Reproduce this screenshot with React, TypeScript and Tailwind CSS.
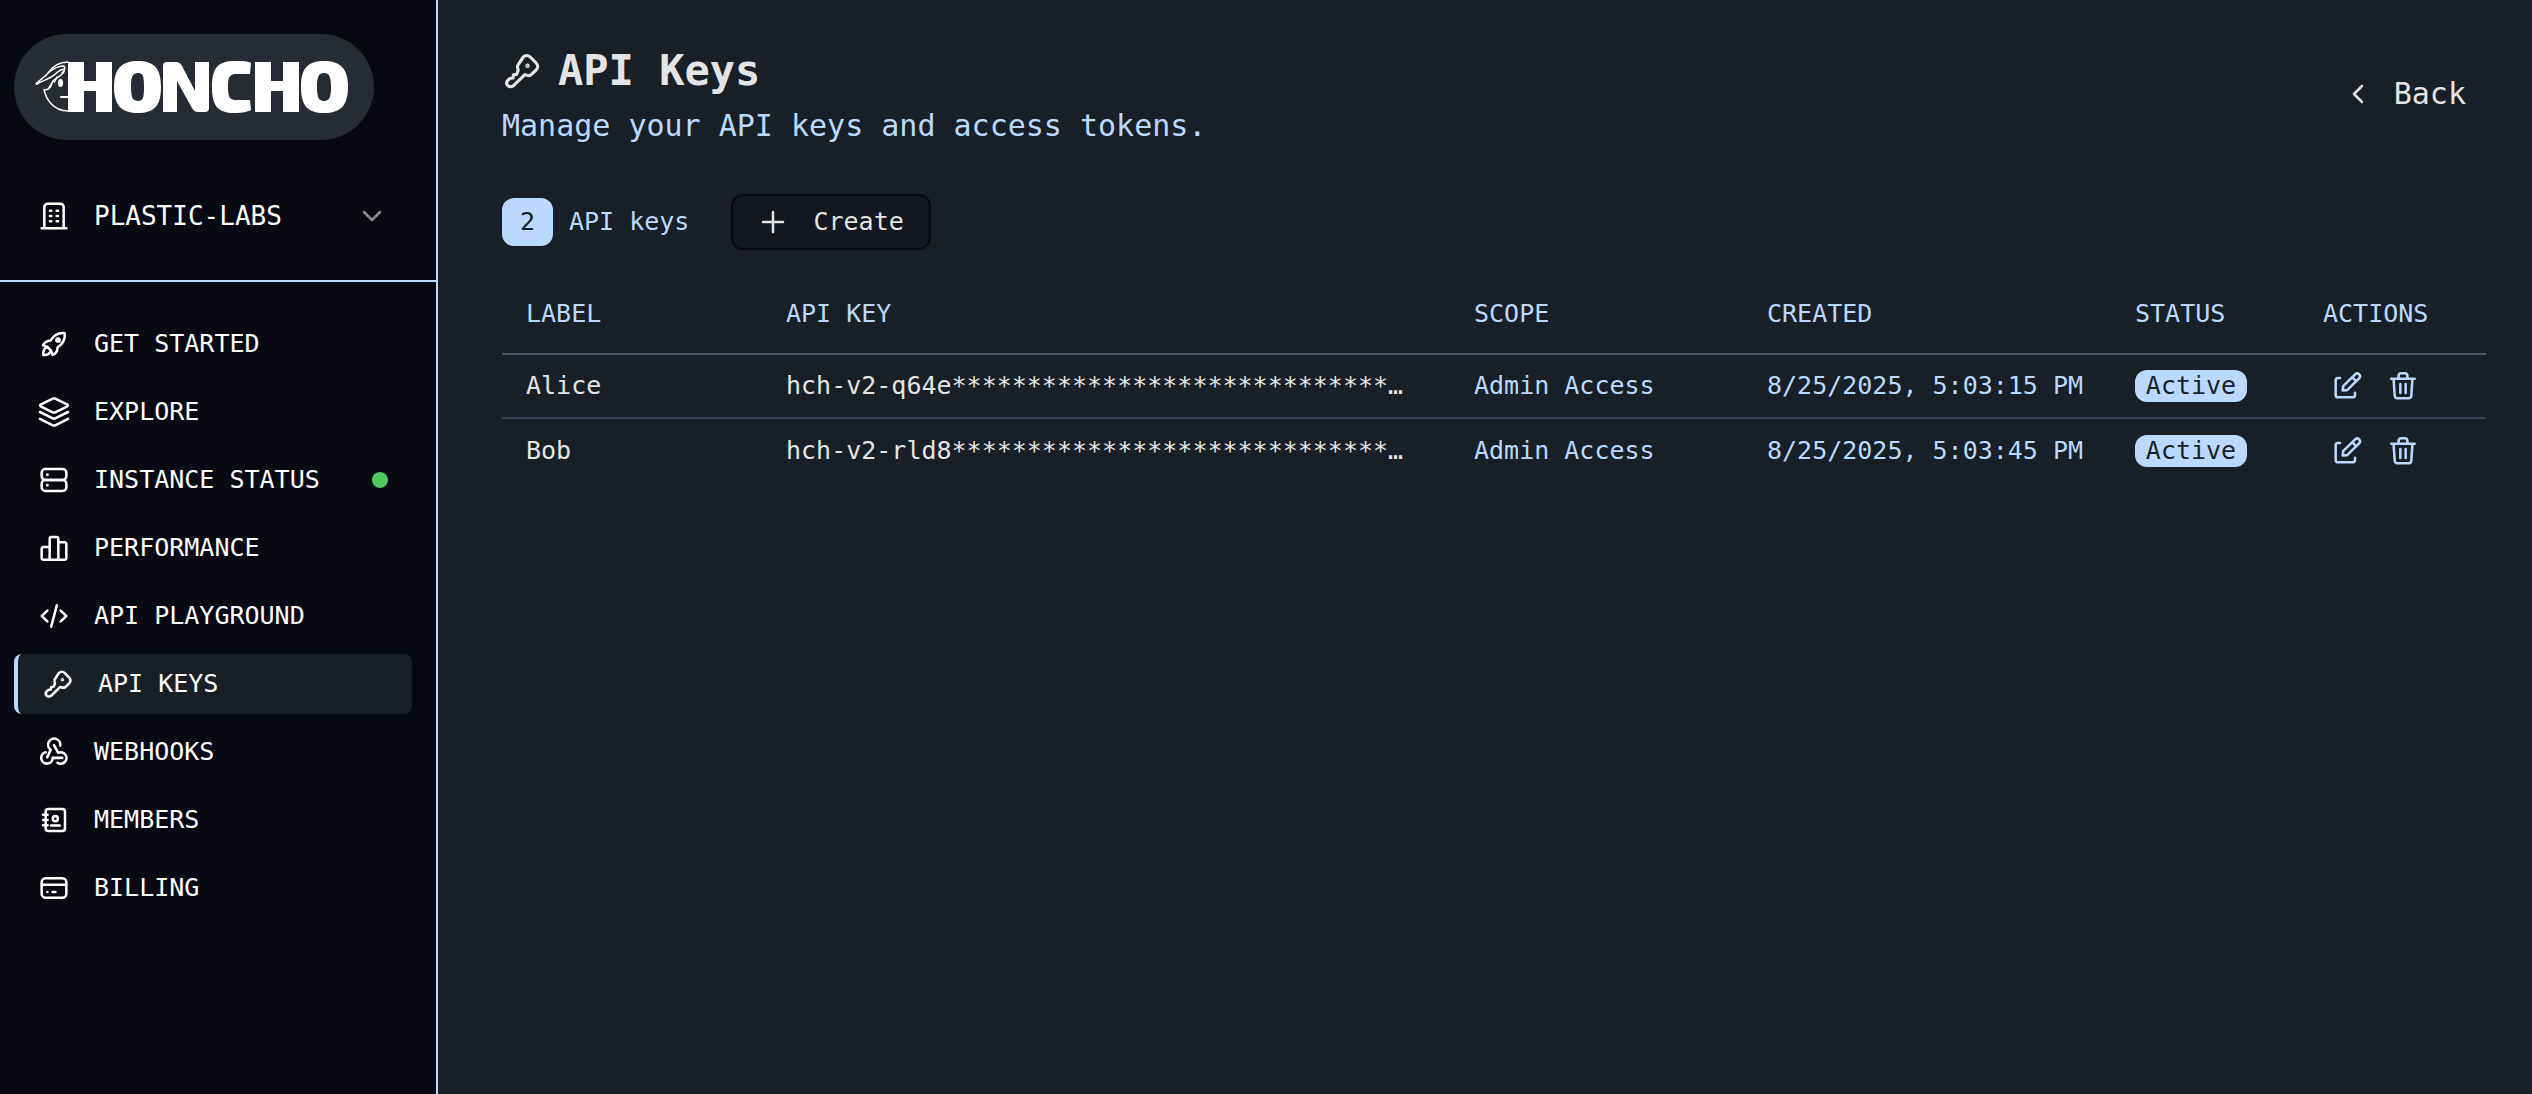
import type { ReactNode } from "react";

function Icon({ children, size = "size-8" }: { children: ReactNode; size?: string }) {
  return (
    <svg
      aria-hidden="true"
      className={`${size} shrink-0`}
      viewBox="0 0 24 24"
      fill="none"
      stroke="currentColor"
      strokeWidth="1.9"
      strokeLinecap="round"
      strokeLinejoin="round"
    >
      {children}
    </svg>
  );
}

const building = (
  <>
    <path d="M2.75 21.25h18.5M4.75 21V5.25a2.5 2.5 0 0 1 2.5-2.5h9.5a2.5 2.5 0 0 1 2.5 2.5V21" />
    <path d="M9 8h1M14 8h1M9 12h1M14 12h1M9 16h1M14 16h1" strokeWidth="1.9" />
  </>
);

const rocket = (
  <>
    <path d="M7 14.2 3.8 13c.9-2.3 2.7-3.5 5.7-3.7C12 5.3 15.5 3.4 20 3.9c.6 4.6-1.3 8-5.3 10.6-.1 2.9-1.3 4.8-3.7 5.7L9.7 17" />
    <path d="M7 14.2c-2.3.8-3.3 2.8-3.1 6 3.3.2 5.2-.9 5.8-3.2M7 14.2 9.7 17" />
    <circle cx="15" cy="9" r="1.2" fill="currentColor" />
  </>
);

const layers = (
  <path d="M11.1 1.9a2 2 0 0 1 1.8 0l8.8 4.3c.9.4.9 1.2 0 1.7l-8.8 4.3a2 2 0 0 1-1.8 0L2.3 7.9c-.9-.5-.9-1.3 0-1.7zM1.5 12l9.6 4.8a2 2 0 0 0 1.8 0l9.6-4.8M1.5 17.2l9.6 4.8a2 2 0 0 0 1.8 0l9.6-4.8" />
);

const server = (
  <>
    <rect x="2.75" y="3.75" width="18.5" height="8.25" rx="2.75" />
    <rect x="2.75" y="12" width="18.5" height="8.25" rx="2.75" />
    <path d="M7 8h.01M7 16h.01" strokeWidth="2.2" />
  </>
);

const chart = (
  <path d="M2.75 19.25V12.75a1.5 1.5 0 0 1 1.5-1.5h4.5v9.5H4.25a1.5 1.5 0 0 1-1.5-1.5zM8.75 20.75V5.25a1.5 1.5 0 0 1 1.5-1.5h3.5a1.5 1.5 0 0 1 1.5 1.5v15.5zM15.25 7.75h4.5a1.5 1.5 0 0 1 1.5 1.5v10a1.5 1.5 0 0 1-1.5 1.5h-4.5M8.75 20.75h6.5" />
);

const code = <path d="m7 8-4.2 4L7 16M17 8l4.2 4L17 16M14.1 4l-4.2 16" />;

const key = (
  <>
    <path d="M12.8 3.6a2.9 2.9 0 0 1 4.1 0l3.6 3.6a2.9 2.9 0 0 1 0 4.1l-2.6 2.6c-.8.8-1.9 1-2.9.7l-1.3-.4-6.8 6.6c-1.5 1.1-3.2.6-3.9-.6-.4-.9-.2-1.9.5-2.6l1.2-1.1 1.9-.3.3-1.9 1.9-.3.9-2.5-.3-1.2c-.2-1 .1-2.1.8-2.8z" />
    <circle cx="15.3" cy="8.8" r=".4" fill="currentColor" />
  </>
);

const webhook = (
  <>
    <path d="M16.7 7.2A4.6 4.6 0 1 0 9.5 10.3L6.9 16" />
    <path d="M12 6.9l3.2 5.7a4.3 4.3 0 1 1-.6 7.4" />
    <path d="M5.8 12.2A4.3 4.3 0 1 0 11 16.4h7.2" />
  </>
);

const members = (
  <>
    <rect x="5.75" y="3.75" width="14.5" height="16.5" rx="2" />
    <path d="M3.8 8h3.4M3.8 12h3.4M3.8 16h3.4M9.8 16.2h6.5" />
    <circle cx="13" cy="11" r="1.9" />
  </>
);

const card = (
  <>
    <rect x="2.75" y="4.75" width="18.5" height="14.5" rx="3" />
    <path d="M3 9.5h18" />
    <path d="M7 15h.01M11 15h2" strokeWidth="2" />
  </>
);

const edit = (
  <>
    <path d="M6.8 6H5.3a1.8 1.8 0 0 0-1.8 1.8v10.9a1.8 1.8 0 0 0 1.8 1.8h10.9a1.8 1.8 0 0 0 1.8-1.8v-1.6" />
    <path d="m8.8 15.4.3-3.3 9-8.8a2.1 2.1 0 0 1 3 3l-9 8.8zM16 5.5l3 3" />
  </>
);

const trash = (
  <path d="M3.2 6.5h17.6M8.7 6.3V4.5a2 2 0 0 1 2-2h2.6a2 2 0 0 1 2 2v1.8M4.9 6.5l.9 12.8a2 2 0 0 0 2 1.9h8.4a2 2 0 0 0 2-1.9l.9-12.8M10 10.5v6.8M14 10.5v6.8" />
);

const nav: { label: string; icon: ReactNode; active?: boolean; dot?: boolean }[] = [
  { label: "GET STARTED", icon: rocket },
  { label: "EXPLORE", icon: layers },
  { label: "INSTANCE STATUS", icon: server, dot: true },
  { label: "PERFORMANCE", icon: chart },
  { label: "API PLAYGROUND", icon: code },
  { label: "API KEYS", icon: key, active: true },
  { label: "WEBHOOKS", icon: webhook },
  { label: "MEMBERS", icon: members },
  { label: "BILLING", icon: card },
];

const mask = "*".repeat(29) + "…";

const rows = [
  { label: "Alice", apiKey: "hch-v2-q64e" + mask, created: "8/25/2025, 5:03:15 PM" },
  { label: "Bob", apiKey: "hch-v2-rld8" + mask, created: "8/25/2025, 5:03:45 PM" },
];

function Logo() {
  return (
    <a
      href="#home"
      aria-label="Honcho"
      className="flex h-[106px] w-[360px] items-center rounded-[53px] bg-[#252c33] pl-[21px] text-white"
    >
      <svg aria-hidden="true" className="h-[54px] w-[314px]" viewBox="0 0 314 54" fill="none">
        <g stroke="currentColor" strokeWidth="1.4" strokeLinecap="round" strokeLinejoin="round">
          <path d="M33 2C25 2 18 6 13.5 12.5C10 17.5 4.5 19 2 23.5C10 20 17 18 22 12.5C27 8.5 30 8 29 11.5C28 15 22 17 18 21L15.5 27C14 29 12 30.5 9 29.5C11 39 18 51 33 51" />
          <path d="M13.5 12.5C18 9 24 5.5 28.5 6C31 7 29.5 10.5 27 13M18 21L19.5 22L22 17M18 21L13 29" />
          <path d="M26 37h7" strokeWidth="2" />
        </g>
        <circle cx="2" cy="23.5" r="1.5" fill="currentColor" />
        <ellipse cx="25.5" cy="23" rx="2.5" ry="4" fill="currentColor" />
        <path
          fill="currentColor"
          fillRule="evenodd"
          d="M33 2H49V21H61V2H77V52H61V31H49V52H33ZM103 1C119 1 126 8 126 27S119 53 103 53S79 46 79 27S87 1 103 1ZM103 13C98 13 96 16 96 27S98 41 103 41S109 38 109 27S108 13 103 13ZM132 2H141Q145 2 147 6L160 31V2H174V48Q174 52 170 52H163Q159 52 157 48L142 21V52H128V6Q128 2 132 2ZM216 3L215 14H202C195 14 193 16 193 27S195 40 202 40H215L216 50C212 52 208 53 199 53C183 53 177 46 177 27S183 1 199 1C208 1 212 1 216 3ZM220 2H236V21H248V2H264V52H248V31H236V52H220ZM289 1C305 1 313 8 313 27S305 53 289 53S266 46 266 27S273 1 289 1ZM289 13C284 13 282 16 282 27S284 41 289 41S296 38 296 27S294 13 289 13Z"
        />
      </svg>
    </a>
  );
}

export default function App() {
  return (
    <div className="flex min-h-screen bg-[#181f26] font-['DejaVu_Sans_Mono',monospace] text-[25px] leading-8 text-[#e4e4e4]">
      <aside className="w-[438px] shrink-0 border-r-2 border-[#bbd9ff] bg-[#080913] text-white">
        <div className="border-b-2 border-[#bbd9ff] px-[14px] py-[34px]">
          <Logo />
          <button type="button" className="mt-[46px] flex h-[60px] w-full items-center pr-[38px] pl-6 text-left">
            <Icon>{building}</Icon>
            <span className="ml-6 flex-1 text-[26px]">PLASTIC-LABS</span>
            <svg aria-hidden="true" className="size-6 text-[#8a8a90]" viewBox="0 0 24 24" fill="none" stroke="currentColor" strokeWidth="2.5" strokeLinecap="round" strokeLinejoin="round">
              <path d="m4 8 8 8 8-8" />
            </svg>
          </button>
        </div>
        <nav className="flex flex-col gap-2 pt-8 pr-6 pl-[14px]">
          {nav.map((item) => (
            <a
              key={item.label}
              href="#section"
              aria-current={item.active ? "page" : undefined}
              className={
                item.active
                  ? "flex h-[60px] items-center rounded-lg border-l-4 border-[#bbd9ff] bg-[#181f26] px-6"
                  : "flex h-[60px] items-center rounded-lg px-6"
              }
            >
              <Icon>{item.icon}</Icon>
              <span className="ml-6 flex-1 whitespace-nowrap">{item.label}</span>
              {item.dot && <span className="size-4 shrink-0 rounded-full bg-[#50c860]" />}
            </a>
          ))}
        </nav>
      </aside>

      <main className="min-w-0 flex-1 pt-12 pr-[46px] pl-16">
        <header className="flex items-start justify-between">
          <div>
            <h1 className="flex items-center gap-4 text-[42px] leading-[46px] font-bold">
              <Icon size="size-10">{key}</Icon>
              API Keys
            </h1>
            <p className="mt-[10px] text-[30px] leading-11 text-[#bbd9ff]">Manage your API keys and access tokens.</p>
          </div>
          <button type="button" className="mt-4 mr-5 flex h-[60px] items-center gap-[22px] text-[30px]">
            <svg aria-hidden="true" className="size-7" viewBox="0 0 28 28" fill="none" stroke="currentColor" strokeWidth="2.5" strokeLinecap="round" strokeLinejoin="round">
              <path d="m18 6-8 8 8 8" />
            </svg>
            Back
          </button>
        </header>

        <div className="mt-[46px] flex items-center">
          <span className="flex h-12 w-[51px] items-center justify-center rounded-xl bg-[#bbd9ff] text-[#181f26]">2</span>
          <span className="ml-4 text-[#bbd9ff]">API keys</span>
          <button type="button" className="ml-[42px] flex h-14 w-[200px] items-center rounded-xl border-2 border-[#080913] bg-[#141720] pl-6">
            <svg aria-hidden="true" className="size-8" viewBox="0 0 32 32" fill="none" stroke="currentColor" strokeWidth="2.5" strokeLinecap="round">
              <path d="M16 6v20M6 16h20" />
            </svg>
            <span className="ml-6">Create</span>
          </button>
        </div>

        <table className="mt-6 w-full table-fixed border-collapse text-left text-[#bbd9ff]">
          <colgroup>
            <col className="w-[260px]" />
            <col className="w-[688px]" />
            <col className="w-[293px]" />
            <col className="w-[368px]" />
            <col className="w-[188px]" />
            <col className="w-[187px]" />
          </colgroup>
          <thead>
            <tr className="h-[80px] border-b-2 border-[#4a5565]">
              {["LABEL", "API KEY", "SCOPE", "CREATED", "STATUS", "ACTIONS"].map((h) => (
                <th key={h} scope="col" className="px-6 font-normal whitespace-nowrap">
                  {h}
                </th>
              ))}
            </tr>
          </thead>
          <tbody>
            {rows.map((row) => (
              <tr key={row.label} className="h-16 border-b-2 border-[#364153] last:border-b-0">
                <td className="px-6 text-[#e4e4e4]">{row.label}</td>
                <td className="px-6 whitespace-nowrap text-[#e4e4e4]">{row.apiKey}</td>
                <td className="px-6 whitespace-nowrap">Admin Access</td>
                <td className="pl-6 whitespace-nowrap">{row.created}</td>
                <td className="px-6">
                  <span className="flex h-8 w-28 items-center justify-center rounded-xl bg-[#bbd9ff] text-[#181f26]">Active</span>
                </td>
                <td className="px-6">
                  <div className="flex gap-6 pl-2">
                    <button type="button" aria-label={`Edit ${row.label}`}>
                      <Icon>{edit}</Icon>
                    </button>
                    <button type="button" aria-label={`Delete ${row.label}`}>
                      <Icon>{trash}</Icon>
                    </button>
                  </div>
                </td>
              </tr>
            ))}
          </tbody>
        </table>
      </main>
    </div>
  );
}
